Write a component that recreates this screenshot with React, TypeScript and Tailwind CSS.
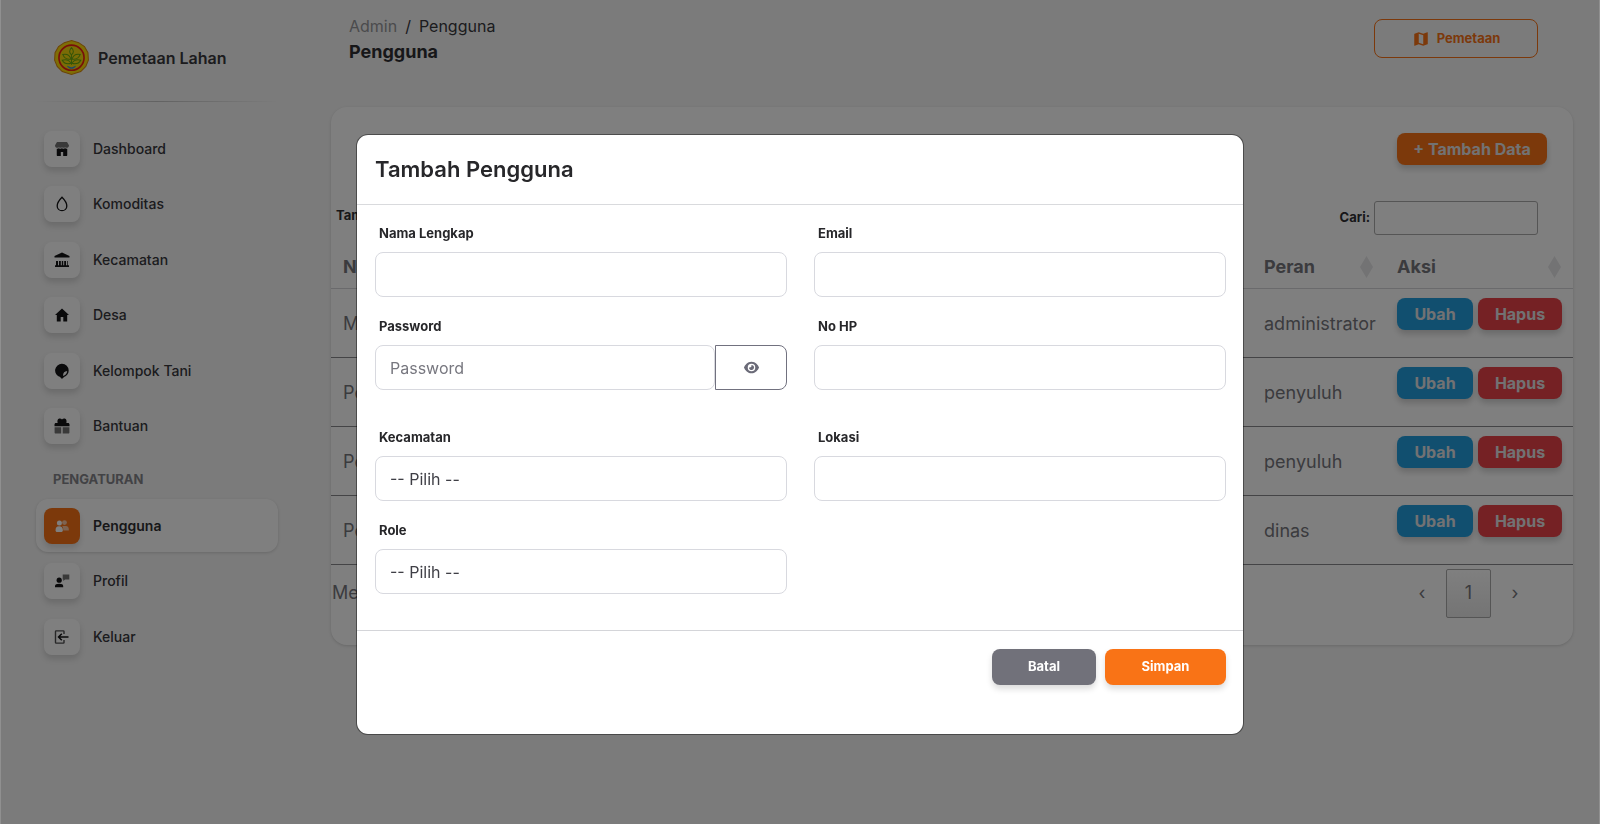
import type { ReactNode } from "react";
import { FaEye } from "react-icons/fa6";
import { MdMap } from "react-icons/md";

function Logo() {
  return (
    <svg viewBox="0 0 34 34" className="size-[35px]" aria-hidden="true">
      <path
        d="M17 .6 24 2.6 29.6 6.4 33 12.4 33.4 19.5 30.9 25.6 26 30.6 20.7 32.2 17 33.4 13.3 32.2 8 30.6 3.1 25.6 .6 19.5 1 12.4 4.4 6.4 10 2.6Z"
        fill="#ffdc08"
        stroke="#d98a10"
        strokeWidth="1"
      />
      <circle cx="17" cy="17.2" r="12.2" fill="#f4d80c" stroke="#f01d14" strokeWidth="1.6" />
      <g fill="none" stroke="#68a810" strokeWidth="1">
        <path d="M17 7.5c2.4 2.6 2.4 4.8 0 7-2.4-2.2-2.4-4.4 0-7Z" />
        <path d="M17 24V14M16.5 18.5c-4 .8-6.5-.8-8-4.5 4-.8 6.8.8 8 4.5ZM17.5 18.5c4 .8 6.5-.8 8-4.5-4-.8-6.800.8-8 4.500Z" />
        <path d="M16.5 22.6c-3.800 1.200-6.600.2-8.500-3 4-1.100 6.800 0 8.500 3ZM17.500 22.600c3.800 1.200 6.600.2 8.500-3-4-1.100-6.800 0-8.500 3Z" />
      </g>
      <path d="M12.500 25c1.600 0 2.500 1.400 4.500 1.400s2.900-1.400 4.500-1.400c-.9 2-2.500 3-4.500 3s-3.600-1-4.500-3Z" fill="#3f8fd0" />
    </svg>
  );
}

const icons: Record<string, ReactNode> = {
  Dashboard: (
    <svg viewBox="0 0 47 47" className="size-[14px]" fill="currentColor">
      <path
        opacity=".6"
        d="M46.72 10.74 40.84.95C40.49.36 39.85 0 39.17 0H7.83C7.15 0 6.510.36 6.160.95L.28 10.740C.1 11.050 0 11.390 0 11.750c0 4.320 3.480 7.820 7.800 7.830 1.950 0 3.820-.71 5.250-2.010 2.970 2.680 7.480 2.680 10.440 0 2.970 2.690 7.490 2.690 10.460 0 2.300 2.070 5.600 2.600 8.420 1.340A7.800 7.800 0 0 0 47 11.750c0-.36-.1-.7-.28-1.010Z"
      />
      <path d="M39.200 22.490a10.600 10.600 0 0 1-5.250-1.400c-2.810 1.590-6.030 1.840-8.970.71a11.500 11.500 0 0 1-1.480-.7c-2.800 1.590-6.020 1.830-8.960.7a11.500 11.500 0 0 1-1.490-.7 10.600 10.600 0 0 1-7.170 1.190v22.430c0 1.230.87 2.220 1.950 2.220h11.750V33.610h7.840v13.330h11.750c1.080 0 1.950-.99 1.950-2.220V22.280c-.63.13-1.280.2-1.920.21Z" />
    </svg>
  ),
  Komoditas: (
    <svg viewBox="0 0 16 16" className="size-4" fill="none" stroke="currentColor" strokeWidth="1.300">
      <path d="M8 1.200C5.600 3.600 3.200 6.800 3.200 9.900 3.200 12.800 5.300 14.700 8 14.700s4.800-1.900 4.800-4.800C12.800 6.800 10.400 3.600 8 1.200Z" />
    </svg>
  ),
  Kecamatan: (
    <svg viewBox="0 0 16 16" className="size-4" fill="currentColor">
      <path d="M8 .5 15.500 4v1.400H.5V4ZM2 9h2v4.200h1V9h1.800v4.200h1V9h1.400v4.200h1V9H12v4.200h1V9h.7v4.200H15V15H1v-1.800h1Z" />
    </svg>
  ),
  Desa: (
    <svg viewBox="0 0 14 14" className="size-[14px]" fill="currentColor">
      <path d="M7 .5 14 7h-1.800v6.500H8.300V9H5.700v4.500H1.800V7H0Z" />
    </svg>
  ),
  "Kelompok Tani": (
    <svg viewBox="0 0 14 16" className="h-4 w-[14px]" fill="currentColor">
      <path
        fillRule="evenodd"
        d="M7 .8a6.700 6.700 0 0 1 6.700 6.700c0 3-2 5.500-4.700 6.400L7.600 15.600H6.200L5.200 14A6.700 6.700 0 0 1 7 .8ZM8 13c2.500-.5 4-2.200 4.200-4.900-2.700.2-4.100 1.600-4.200 4.900Z"
      />
    </svg>
  ),
  Bantuan: (
    <svg viewBox="0 0 16 16" className="size-4" fill="currentColor">
      <path d="M.5 8.200V6.500c0-.9.600-1.500 1.400-1.500h1.700C3.100 2.500 3.600.8 5.300.5 6.500.3 7.400.8 8 1.600 8.600.8 9.500.3 10.700.5c1.700.3 2.200 2 1.700 4.500h1.700c.8 0 1.400.6 1.400 1.500v1.700Z" />
      <path opacity=".6" d="M.6 9.200h6.600v6.200H1.600c-.6 0-1-.4-1-1ZM8.700 9.200h6.700v5.200c0 .6-.4 1-1 1H8.700Z" />
    </svg>
  ),
  Pengguna: (
    <svg viewBox="0 0 14 14" className="size-[14px]" fill="currentColor">
      <g opacity=".6">
        <circle cx="9.500" cy="3.600" r="2.400" />
        <path d="M7.200 7h3.600c2 0 3 1.500 3 3.200v1.300H8.300C8.300 9.500 8 8.200 7.200 7Z" />
      </g>
      <circle cx="4.400" cy="4" r="2.500" />
      <path d="M.5 11.400C.5 8.800 1.700 7.300 4.100 7.300s3.800 1.500 3.800 4.100c-.3 1.100-1 1.600-2 1.600H2.400c-1 0-1.700-.5-1.900-1.600Z" />
    </svg>
  ),
  Profil: (
    <svg viewBox="0 0 16 16" className="size-4" fill="currentColor">
      <path opacity=".6" d="M8.700 1.500h6.600v5h-4.200L9.300 8.100V6.500h-.6Z" />
      <circle cx="5.200" cy="7.200" r="2.600" />
      <path d="M1 14.300v-1.200c0-1.700 1.600-2.400 4.200-2.400s4 .7 4 2.400v1.200Z" />
    </svg>
  ),
  Keluar: (
    <svg viewBox="0 0 16 16" className="size-4" fill="none" stroke="currentColor">
      <path opacity=".75" strokeWidth="1.400" d="M10 5V2.600c0-.4-.3-.7-.7-.7H2.200c-.4 0-.7.3-.7.7v10.800c0 .4.3.7.7.7h7.100c.4 0 .7-.3.7-.7V11" />
      <path strokeWidth="1.500" d="M14.500 8H4.500M7.800 4.700 4.500 8l3.300 3.300" />
    </svg>
  ),
};

function NavItem({ label, active = false }: { label: string; active?: boolean }) {
  return (
    <li>
      <a
        href="#"
        aria-current={active ? "page" : undefined}
        className={
          active
            ? "flex h-[53px] items-center gap-[13px] rounded-xl bg-white px-2 text-sm font-semibold text-[#2f2f33] shadow-[0_1px_3px_rgba(0,0,0,0.15)]"
            : "flex h-[53px] items-center gap-[13px] px-2 text-sm font-medium text-[#38383d]"
        }
      >
        <span
          className={
            active
              ? "flex size-9 items-center justify-center rounded-lg bg-[#f97316] text-white shadow-[0_4px_6px_rgba(0,0,0,0.14)]"
              : "flex size-9 items-center justify-center rounded-lg bg-white text-[#141416] shadow-[0_4px_6px_rgba(0,0,0,0.14)]"
          }
          aria-hidden="true"
        >
          {icons[label]}
        </span>
        {label}
      </a>
    </li>
  );
}

function Sidebar() {
  return (
    <aside className="w-[314px] shrink-0 px-9">
      <a href="#" className="flex items-center gap-[9px] pl-[18px] pt-10 font-semibold text-[#38383d]">
        <Logo />
        Pemetaan Lahan
      </a>
      <hr className="mt-[26px] h-px border-0 bg-linear-to-r from-transparent via-black/20 to-transparent" />
      <nav className="mt-5">
        <ul className="flex h-[331px] flex-col justify-between">
          {["Dashboard", "Komoditas", "Kecamatan", "Desa", "Kelompok Tani", "Bantuan"].map((label) => (
            <NavItem key={label} label={label} />
          ))}
        </ul>
        <h2 className="mb-[10px] mt-4 pl-[17px] text-[13px] font-bold leading-5 text-[#85858a]">PENGATURAN</h2>
        <ul className="flex h-[164px] flex-col justify-between">
          <NavItem label="Pengguna" active />
          <NavItem label="Profil" />
          <NavItem label="Keluar" />
        </ul>
      </nav>
    </aside>
  );
}

function SortMark() {
  return (
    <svg viewBox="0 0 13 22" className="h-[22px] w-[13px]" fill="#e6e6e8" aria-hidden="true">
      <path d="M6.500 0 13 11 6.500 22 0 11Z" />
    </svg>
  );
}

const rows = [
  { name: "Mia", role: "administrator" },
  { name: "Peri", role: "penyuluh" },
  { name: "Pela", role: "penyuluh" },
  { name: "Peli", role: "dinas" },
];

function UserTable() {
  return (
    <table className="w-full table-fixed border-collapse text-left text-lg text-[#76767c]">
      <colgroup>
        <col />
        <col className="w-[133px]" />
        <col className="w-[188px]" />
      </colgroup>
      <thead>
        <tr className="h-11 border-b border-[#d4d4d8]">
          {["Nama", "Peran", "Aksi"].map((title) => (
            <th key={title} className="px-3 pt-[2px] font-bold">
              <span className="flex items-center justify-between">
                {title}
                <SortMark />
              </span>
            </th>
          ))}
        </tr>
      </thead>
      <tbody>
        {rows.map((row) => (
          <tr key={row.name} className="h-[69px] border-b border-[#88888c]">
            <td className="px-3 pt-[2px]">{row.name}</td>
            <td className="whitespace-nowrap pl-3 pt-[2px]">{row.role}</td>
            <td className="pb-[26px] pl-3 pt-[9px]">
              <span className="flex gap-[5px] text-base font-bold text-[#e4e4e7]">
                <button type="button" className="h-8 w-[76px] rounded-lg bg-[#229fdf] shadow-[0_4px_6px_rgba(0,0,0,0.18)]">
                  Ubah
                </button>
                <button type="button" className="h-8 w-[84px] rounded-lg bg-[#ea4349] shadow-[0_4px_6px_rgba(0,0,0,0.18)]">
                  Hapus
                </button>
              </span>
            </td>
          </tr>
        ))}
      </tbody>
    </table>
  );
}

const inputClass =
  "h-[45px] w-full appearance-none rounded-lg border border-[#d8d9df] bg-white px-[14px] text-base text-[#3f3f46] placeholder:text-[#77777f]";

function Field({ id, label, children }: { id: string; label: string; children?: ReactNode }) {
  return (
    <div className="flex flex-col">
      <label htmlFor={id} className="mb-[9px] ml-1 text-[13px] font-bold leading-5 text-[#27272a]">
        {label}
      </label>
      {children ?? <input id={id} type="text" className={inputClass} />}
    </div>
  );
}

function UserDialog() {
  return (
    <div className="fixed inset-0 flex items-start justify-center border-x border-[#909090] bg-black/50 px-4 pt-[134px]">
      <form
        role="dialog"
        aria-modal="true"
        aria-labelledby="dialog-title"
        className="w-full max-w-[888px] rounded-xl border border-black/40 bg-white bg-clip-padding"
      >
        <h2 id="dialog-title" className="flex h-[70px] items-center border-b border-[#d9dadd] px-[18px] text-[22px] font-semibold text-[#27272a]">
          Tambah Pengguna
        </h2>
        <div className="grid h-[426px] grid-cols-2 content-start gap-x-[27px] border-b border-[#d4d5d9] pl-[18px] pr-[17px] pt-[18px]">
          <div className="flex flex-col gap-[19px]">
            <Field id="nama" label="Nama Lengkap" />
            <Field id="password" label="Password">
              <div className="flex">
                <input id="password" type="password" placeholder="Password" className={inputClass} />
                <button
                  type="button"
                  aria-label="Tampilkan password"
                  className="flex h-[45px] w-[72px] shrink-0 items-center justify-center rounded-r-lg border border-[#71717f] text-[#6b6b78]"
                >
                  <FaEye className="size-[15px]" />
                </button>
              </div>
            </Field>
          </div>
          <div className="flex flex-col gap-[19px]">
            <Field id="email" label="Email" />
            <Field id="hp" label="No HP" />
          </div>
          <div className="mt-[37px] flex flex-col gap-[19px]">
            <Field id="kecamatan" label="Kecamatan">
              <select id="kecamatan" className={inputClass}>
                <option>-- Pilih --</option>
              </select>
            </Field>
            <Field id="role" label="Role">
              <select id="role" className={inputClass}>
                <option>-- Pilih --</option>
              </select>
            </Field>
          </div>
          <div className="mt-[37px]">
            <Field id="lokasi" label="Lokasi" />
          </div>
        </div>
        <div className="flex h-[103px] justify-end gap-[9px] px-[17px] pt-[18px] text-[13px] font-bold text-white">
          <button type="button" className="h-9 w-[104px] rounded-lg bg-[#71717a] shadow-[0_4px_6px_rgba(0,0,0,0.14)]">
            Batal
          </button>
          <button type="submit" className="h-9 w-[121px] rounded-lg bg-[#f97316] shadow-[0_4px_6px_rgba(0,0,0,0.14)]">
            Simpan
          </button>
        </div>
      </form>
    </div>
  );
}

export default function App() {
  return (
    <div className="flex min-h-screen bg-[#f6f6f6] font-[Inter,sans-serif]">
      <Sidebar />
      <main className="min-w-0 flex-1 pl-[17px] pr-[27px]">
        <header className="flex h-[107px] items-start justify-between pl-[18px] pr-[35px]">
          <div className="pt-[14px] text-[#38383d]">
            <nav aria-label="Breadcrumb" className="flex gap-2 text-base leading-6">
              <a href="#" className="text-[#96969a]">
                Admin
              </a>
              <span>/</span>
              <span>Pengguna</span>
            </nav>
            <h1 className="text-lg font-bold leading-7 text-[#2f2f33]">Pengguna</h1>
          </div>
          <button
            type="button"
            className="mt-[19px] flex h-[39px] w-[164px] items-center justify-center gap-[7px] rounded-lg border border-[#f97316] text-[13px] font-bold text-[#f97316]"
          >
            <MdMap className="size-[18px]" />
            Pemetaan
          </button>
        </header>
        <section className="rounded-2xl bg-white pb-[27px] shadow-[0_1px_3px_rgba(0,0,0,0.15)]">
          <div className="flex justify-end pr-[26px] pt-[26px]">
            <button
              type="button"
              className="h-8 w-[150px] rounded-lg bg-[#f97316] font-bold text-[#e4e4e7] shadow-[0_4px_6px_rgba(0,0,0,0.18)]"
            >
              + Tambah Data
            </button>
          </div>
          <div className="mt-9 flex items-start justify-between pl-[5px] pr-[35px] text-[13px] font-bold text-[#2f2f33]">
            <label className="flex items-center gap-1 pt-[5px]">
              Tampilkan
              <select className="h-5 font-normal">
                <option>10</option>
              </select>
            </label>
            <label className="flex items-center gap-1">
              Cari:
              <input type="search" className="h-[34px] w-[164px] rounded-[3px] border border-[#aaa]" />
            </label>
          </div>
          <div className="mt-[9px]">
            <UserTable />
          </div>
          <div className="mt-1 flex items-start justify-between pl-px pr-9 text-lg text-[#76767c]">
            <p className="pt-[10px]">Menampilkan 1 sampai 4 dari 4 data</p>
            <div className="flex h-[49px] items-stretch gap-[2px]">
              <button type="button" aria-label="Sebelumnya" className="w-11">
                ‹
              </button>
              <button type="button" className="w-[45px] rounded-[2px] border border-[#aaa] bg-linear-to-b from-white to-[#e9e9e9]">
                1
              </button>
              <button type="button" aria-label="Berikutnya" className="w-11">
                ›
              </button>
            </div>
          </div>
        </section>
      </main>
      <UserDialog />
    </div>
  );
}
